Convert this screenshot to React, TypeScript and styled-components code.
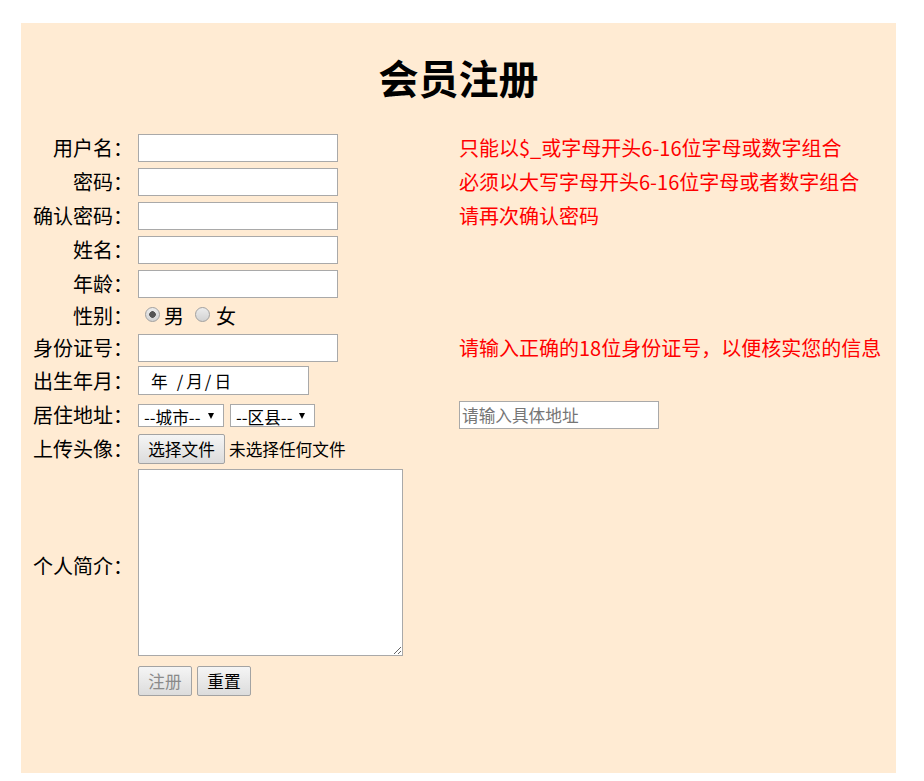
import React from "react";
import styled, { createGlobalStyle } from "styled-components";

const Global = createGlobalStyle`
  html, body { margin: 0; padding: 0; background: #fff; }
  body { font-family: "Noto Sans CJK SC", "Microsoft YaHei", sans-serif; }
`;

const FONT = `"Noto Sans CJK SC", "Microsoft YaHei", sans-serif`;

const Panel = styled.div`
  width: 875px;
  height: 750px;
  margin: 23px 0 0 21px;
  background: #ffebd3;
  box-sizing: border-box;
  padding-top: 27px;
  font-size: 20px;
  color: #000;
`;

const Title = styled.h1`
  margin: 0;
  height: 54px;
  line-height: 54px;
  text-align: center;
  font-size: 40px;
  font-weight: 700;
`;

const Form = styled.form`
  margin: 27px 0 0 0;
  display: flex;
  flex-direction: column;
`;

const Row = styled.div<{ $h: number; $mt?: number }>`
  display: grid;
  grid-template-columns: 112px 316px 1fr;
  column-gap: 5px;
  align-items: center;
  height: ${(p) => p.$h}px;
  margin-top: ${(p) => p.$mt ?? 0}px;
`;

const Label = styled.label`
  text-align: right;
  line-height: 28px;
  white-space: nowrap;
`;

const Cell = styled.div<{ $start?: boolean }>`
  display: flex;
  align-items: ${(p) => (p.$start ? "flex-start" : "center")};
  align-self: stretch;
`;

const Hint = styled.span`
  color: #ff0000;
  line-height: 28px;
  white-space: nowrap;
`;

const TextInput = styled.input`
  display: block;
  box-sizing: border-box;
  width: 200px;
  height: 28px;
  border: 1px solid #a9a9a9;
  background: #fff;
  padding: 1px 2px;
  margin: 0;
  font: 16.67px ${FONT};
  outline: none;
  &::placeholder {
    color: #757575;
  }
`;

const Radio = styled.input.attrs({ type: "radio" })<{ $ml: number }>`
  appearance: none;
  -webkit-appearance: none;
  margin: 0 0 3px ${(p) => p.$ml}px;
  width: 15px;
  height: 15px;
  border-radius: 50%;
  border: 1px solid #a0a0a0;
  box-sizing: border-box;
  background: linear-gradient(#ececec, #d2d2d2);
  &:checked {
    background: radial-gradient(circle, #555 0 3px, transparent 3.6px),
      linear-gradient(#ececec, #d2d2d2);
  }
`;

const RadioText = styled.span<{ $ml: number }>`
  margin-left: ${(p) => p.$ml}px;
  line-height: 28px;
`;

const DateBox = styled.div`
  box-sizing: border-box;
  width: 171px;
  height: 29px;
  border: 1px solid #a9a9a9;
  background: #fff;
  display: flex;
  align-items: center;
  padding-left: 12px;
  font: 16.67px ${FONT};
`;

const Seg = styled.span<{ $ml?: number }>`
  margin-left: ${(p) => p.$ml ?? 0}px;
`;

const SelectWrap = styled.span<{ $w: number; $ml?: number }>`
  position: relative;
  display: block;
  width: ${(p) => p.$w}px;
  height: 23px;
  margin-left: ${(p) => p.$ml ?? 0}px;
  &::after {
    content: "";
    position: absolute;
    right: 10px;
    top: 9px;
    border-left: 3.5px solid transparent;
    border-right: 3.5px solid transparent;
    border-top: 6px solid #000;
    pointer-events: none;
  }
`;

const Select = styled.select`
  display: block;
  appearance: none;
  -webkit-appearance: none;
  box-sizing: border-box;
  width: 100%;
  height: 100%;
  margin: 0;
  border: 1px solid #a9a9a9;
  border-radius: 0;
  background: #fff;
  color: #000;
  font: 16.67px ${FONT};
  padding: 0 0 0 5px;
  outline: none;
`;

const Btn = styled.button<{ $w: number; $ml?: number; $muted?: boolean }>`
  display: block;
  box-sizing: border-box;
  width: ${(p) => p.$w}px;
  height: 30px;
  margin: 0 0 0 ${(p) => p.$ml ?? 0}px;
  padding: 0;
  border: 1px solid #a3a3a3;
  border-radius: 2px;
  background: linear-gradient(#f5f5f5, #dcdcdc);
  color: ${(p) => (p.$muted ? "#8a8a8a" : "#000")};
  font: 16.67px ${FONT};
`;

const FileText = styled.span`
  margin-left: 4px;
  font: 16.67px ${FONT};
  color: #000;
`;

const Area = styled.textarea`
  display: block;
  box-sizing: border-box;
  width: 265px;
  height: 187px;
  margin: 0;
  border: 1px solid #a9a9a9;
  background: #fff;
  font: 16.67px ${FONT};
  outline: none;
`;

export default function App() {
  return (
    <>
      <Global />
      <Panel>
        <Title>会员注册</Title>
        <Form onSubmit={(e) => e.preventDefault()}>
          <Row $h={34}>
            <Label>用户名：</Label>
            <Cell><TextInput /></Cell>
            <Hint>只能以$_或字母开头6-16位字母或数字组合</Hint>
          </Row>
          <Row $h={34}>
            <Label>密码：</Label>
            <Cell><TextInput type="password" /></Cell>
            <Hint>必须以大写字母开头6-16位字母或者数字组合</Hint>
          </Row>
          <Row $h={34}>
            <Label>确认密码：</Label>
            <Cell><TextInput type="password" /></Cell>
            <Hint>请再次确认密码</Hint>
          </Row>
          <Row $h={34}>
            <Label>姓名：</Label>
            <Cell><TextInput /></Cell>
            <span />
          </Row>
          <Row $h={34}>
            <Label>年龄：</Label>
            <Cell><TextInput /></Cell>
            <span />
          </Row>
          <Row $h={30}>
            <Label>性别：</Label>
            <Cell>
              <Radio name="sex" defaultChecked $ml={7} />
              <RadioText $ml={4}>男</RadioText>
              <Radio name="sex" $ml={11} />
              <RadioText $ml={6}>女</RadioText>
            </Cell>
            <span />
          </Row>
          <Row $h={34}>
            <Label>身份证号：</Label>
            <Cell><TextInput /></Cell>
            <Hint>请输入正确的18位身份证号，以便核实您的信息</Hint>
          </Row>
          <Row $h={31}>
            <Label>出生年月：</Label>
            <Cell>
              <DateBox>
                <Seg>年</Seg>
                <Seg $ml={9}>/</Seg>
                <Seg $ml={3}>月</Seg>
                <Seg $ml={2}>/</Seg>
                <Seg $ml={3}>日</Seg>
              </DateBox>
            </Cell>
            <span />
          </Row>
          <Row $h={38}>
            <Label>居住地址：</Label>
            <Cell>
              <SelectWrap $w={86}>
                <Select defaultValue="">
                  <option value="">--城市--</option>
                </Select>
              </SelectWrap>
              <SelectWrap $w={85} $ml={6}>
                <Select defaultValue="">
                  <option value="">--区县--</option>
                </Select>
              </SelectWrap>
            </Cell>
            <Cell><TextInput placeholder="请输入具体地址" /></Cell>
          </Row>
          <Row $h={30}>
            <Label>上传头像：</Label>
            <Cell>
              <Btn type="button" $w={87}>选择文件</Btn>
              <FileText>未选择任何文件</FileText>
            </Cell>
            <span />
          </Row>
          <Row $h={194} $mt={5}>
            <Label>个人简介：</Label>
            <Cell $start><Area /></Cell>
            <span />
          </Row>
          <Row $h={30} $mt={3}>
            <span />
            <Cell>
              <Btn type="submit" $w={54} $muted>注册</Btn>
              <Btn type="reset" $w={54} $ml={5}>重置</Btn>
            </Cell>
            <span />
          </Row>
        </Form>
      </Panel>
    </>
  );
}
